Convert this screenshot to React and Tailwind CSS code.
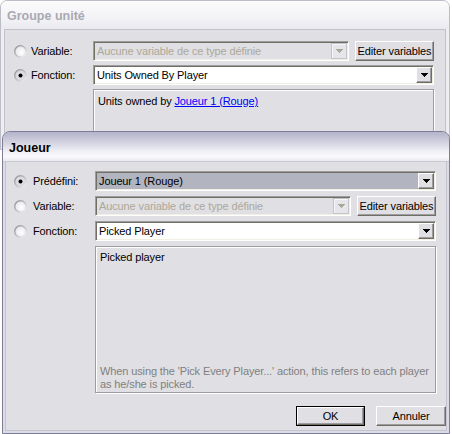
import React from "react";

const SUNKEN =
  "border border-t-[#9d9da1] border-l-[#9d9da1] border-b-white border-r-white shadow-[inset_1px_1px_0_#716f64,inset_-1px_-1px_0_#f1efe2]";
const RAISED =
  "border border-t-white border-l-white border-b-[#716f64] border-r-[#716f64] shadow-[inset_-1px_-1px_0_#9d9da1] bg-[#e0dfe3]";

function Radio({ checked }) {
  return (
    <svg width="13" height="13" viewBox="0 0 13 13" className="shrink-0 block">
      <defs>
        <linearGradient id="rbEdge" x1="0" y1="0" x2="1" y2="1">
          <stop offset="0" stopColor="#86868c" />
          <stop offset="0.55" stopColor="#c4c4c8" />
          <stop offset="1" stopColor="#ffffff" />
        </linearGradient>
        <radialGradient id="rbFill" cx="0.6" cy="0.6" r="0.7">
          <stop offset="0" stopColor="#ffffff" />
          <stop offset="1" stopColor="#e6e6ea" />
        </radialGradient>
      </defs>
      <circle cx="6.5" cy="6.5" r="6.5" fill="url(#rbEdge)" />
      <circle cx="6.5" cy="6.5" r="5" fill={checked ? "#dcdce0" : "url(#rbFill)"} />
      {checked && <circle cx="6.5" cy="6.5" r="2" fill="#000" />}
    </svg>
  );
}

function Arrow({ color }) {
  return (
    <svg width="7" height="4" viewBox="0 0 7 4" className="block">
      <path d="M0 0h7v1h-1v1h-1v1h-1v1h-1v-1h-1v-1h-1v-1h-1z" fill={color} />
    </svg>
  );
}

function DropBtn({ disabled }) {
  if (disabled) {
    return (
      <div className="w-4 h-4 shrink-0 flex items-center justify-center border border-[#c4c3c8] bg-[#e6e5e9] shadow-[inset_1px_1px_0_#f6f6f8]">
        <Arrow color="#aca899" />
      </div>
    );
  }
  return (
    <div className={`w-4 h-4 shrink-0 flex items-center justify-center ${RAISED}`}>
      <Arrow color="#000" />
    </div>
  );
}

function Combo({ width, text, bg = "bg-white", textColor = "text-black", disabled }) {
  return (
    <div
      className={`h-5 ${SUNKEN} ${bg} flex items-center pr-[1px] pl-[3px] shrink-0`}
      style={{ width }}
    >
      <span className={`flex-1 truncate leading-[13px] ${textColor}`}>{text}</span>
      <DropBtn disabled={disabled} />
    </div>
  );
}

function Button({ children, width, isDefault }) {
  if (isDefault) {
    return (
      <div className="h-5 border border-black shrink-0" style={{ width }}>
        <div className={`h-full ${RAISED} flex items-center justify-center leading-[13px]`}>
          {children}
        </div>
      </div>
    );
  }
  return (
    <div
      className={`h-5 ${RAISED} flex items-center justify-center leading-[13px] shrink-0`}
      style={{ width }}
    >
      {children}
    </div>
  );
}

function Row({ checked, label, gap, children }) {
  return (
    <div className="flex items-center h-5">
      <Radio checked={checked} />
      <div className="w-[62px] shrink-0 leading-[13px]" style={{ marginLeft: gap }}>
        {label}
      </div>
      {children}
    </div>
  );
}

export default function App() {
  return (
    <div className="relative w-[452px] h-[434px] overflow-hidden bg-white text-[11px] tracking-[-0.12px] text-black font-['Liberation_Sans',Arial,sans-serif]">
      {/* Back window: Groupe unité (inactive) */}
      <div className="absolute left-0 top-0 w-[450px] h-[150px] rounded-t-[7px] border border-[#bdbdc8] bg-[#ededf2] overflow-hidden flex flex-col">
        <div className="h-[28px] shrink-0 flex items-center pl-[6px] pt-[3px] bg-[linear-gradient(180deg,#fbfbfc_0%,#f3f3f6_60%,#eaeaef_100%)]">
          <span className="text-[12.5px] tracking-normal font-bold text-[#a9a9b2]">Groupe unité</span>
        </div>
        <div className="flex-1 px-[3px] flex flex-col">
          <div className="flex-1 border-l border-r border-t border-[#c2c2cc] bg-[#e0dfe3] pl-[9px] pt-[11px] flex flex-col gap-[4px]">
            <Row label="Variable:" gap={4}>
              <Combo
                width={256}
                text="Aucune variable de ce type définie"
                bg="bg-[#e0dfe3]"
                textColor="text-[#aca899]"
                disabled
              />
              <div className="ml-[6px]">
                <Button width={79}>Editer variables</Button>
              </div>
            </Row>
            <Row checked label="Fonction:" gap={4}>
              <Combo width={341} text="Units Owned By Player" />
            </Row>
            <div className="ml-[79px] w-[341px] h-[80px] border border-[#9d9da1] shadow-[inset_1px_1px_0_#fff,1px_1px_0_#fff] px-[4px] pt-[5px] leading-[13px]">
              Units owned by{" "}
              <span className="text-[#0000ff] underline">Joueur 1 (Rouge)</span>
            </div>
          </div>
        </div>
      </div>

      {/* Front window: Joueur (active) */}
      <div className="absolute left-[2px] top-[131px] w-[448px] h-[303px] rounded-t-[8px] border border-[#7d7d98] bg-[#dcdce6] overflow-hidden flex flex-col">
        <div className="h-[30px] shrink-0 flex items-center pl-[6px] pt-[4px] border-b border-[#c9c9d4] bg-[linear-gradient(180deg,#b3b3cb_0%,#cdcddc_30%,#eeeef4_65%,#fafafc_85%,#e9e9ef_100%)]">
          <span className="text-[12.5px] tracking-normal font-bold text-black">Joueur</span>
        </div>
        <div className="flex-1 px-[2px] pb-[2px] flex flex-col">
          <div className="flex-1 border-l border-r border-b border-[#c4c4d0] bg-[#e0dfe3] pl-[8px] pt-[9px] flex flex-col">
            <div className="flex flex-col gap-[5px] pr-[8px]">
              <Row checked label="Prédéfini:" gap={6}>
                <Combo width={341} text="Joueur 1 (Rouge)" bg="bg-[#b2b4bf]" />
              </Row>
              <Row label="Variable:" gap={6}>
                <Combo
                  width={256}
                  text="Aucune variable de ce type définie"
                  bg="bg-[#e0dfe3]"
                  textColor="text-[#aca899]"
                  disabled
                />
                <div className="ml-[6px]">
                  <Button width={79}>Editer variables</Button>
                </div>
              </Row>
              <Row label="Fonction:" gap={6}>
                <Combo width={341} text="Picked Player" />
              </Row>
              <div className="ml-[81px] w-[341px] h-[147px] border border-[#9d9da1] shadow-[inset_1px_1px_0_#fff,1px_1px_0_#fff] px-[4px] pt-[4px] pb-[1px] flex flex-col justify-between leading-[13px]">
                <div>Picked player</div>
                <div className="text-[#808080]">
                  <div className="whitespace-nowrap">
                    When using the 'Pick Every Player...' action, this refers to each player
                  </div>
                  <div>as he/she is picked.</div>
                </div>
              </div>
            </div>
            <div className="flex justify-end gap-[11px] mt-[13px]">
              <Button width={69} isDefault>
                OK
              </Button>
              <Button width={70}>Annuler</Button>
            </div>
          </div>
        </div>
      </div>
    </div>
  );
}
